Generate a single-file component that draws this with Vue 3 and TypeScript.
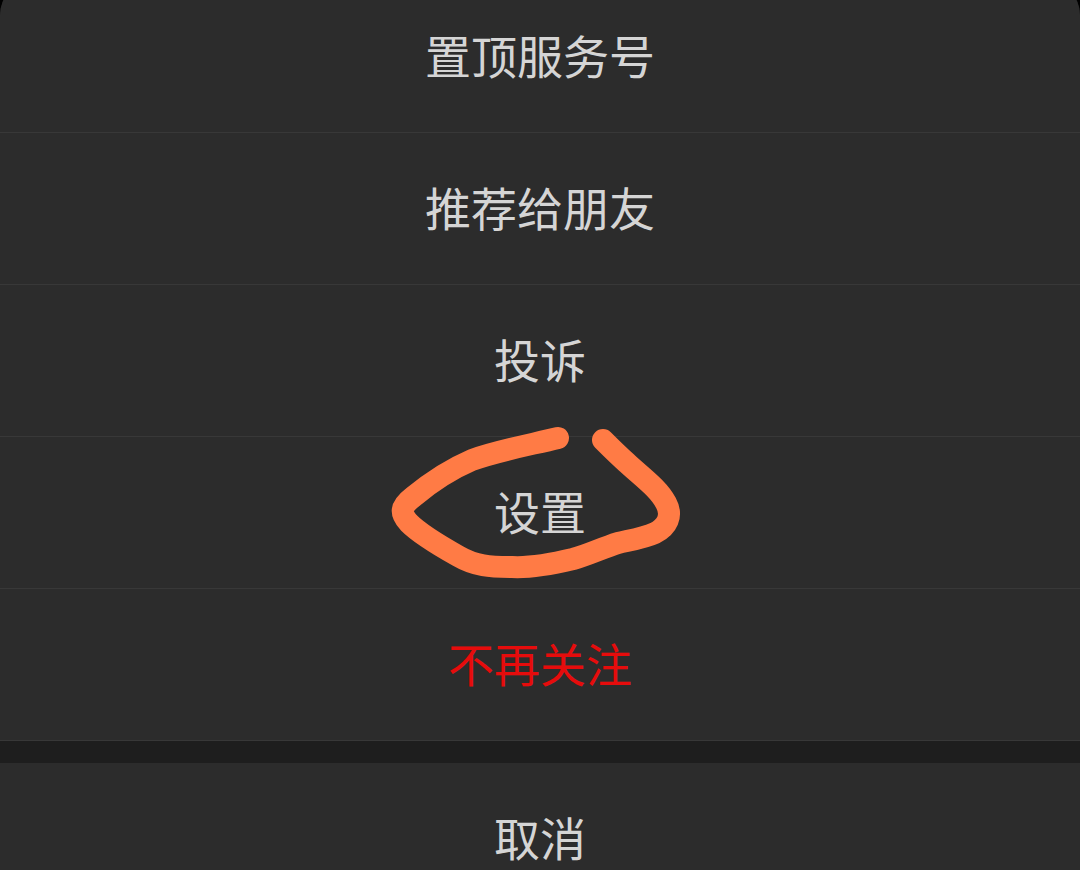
<script setup lang="ts">
interface Action {
  label: string
  danger?: boolean
  marked?: boolean
}

const actions: Action[] = [
  { label: '置顶服务号' },
  { label: '推荐给朋友' },
  { label: '投诉' },
  { label: '设置', marked: true },
  { label: '不再关注', danger: true },
]
</script>

<template>
  <main class="screen">
    <section class="sheet">
      <ul class="actions">
        <li v-for="action in actions" :key="action.label" class="item">
          <button type="button" class="row" :class="{ danger: action.danger }">{{ action.label }}</button>
          <svg v-if="action.marked" class="mark" viewBox="380 420 310 170" aria-hidden="true">
            <path
              d="M558 438 C529 445 496 451 472 460 C451 469 431 482 413 497 C400 507 400 513 409 523 C420 534 442 547 458 556 C475 566 490 567 512 567 C530 568 552 564 573 559 C588 555 602 548 618 543 C631 540 644 538 655 533 C667 527 673 516 666 503 C658 488 642 477 627 463 C618 455 610 447 603 440"
            />
          </svg>
        </li>
      </ul>
      <button type="button" class="row cancel">取消</button>
    </section>
  </main>
</template>

<style>
body {
  margin: 0;
  background: #000;
}
</style>

<style scoped>
.screen {
  height: 100vh;
  overflow: hidden;
  background: #000;
}

/* The sheet's top edge is scrolled slightly above the viewport. */
.sheet {
  margin-top: -19px;
  border-radius: 34px 34px 0 0;
  overflow: hidden;
  background: #1e1e1e;
}

.actions {
  margin: 0;
  padding: 0;
  list-style: none;
}

.item {
  position: relative;
  border-bottom: 1px solid #383838;
  background: #2c2c2c;
}

.row {
  display: block;
  box-sizing: border-box;
  width: 100%;
  height: 151px;
  margin: 0;
  padding: 0 0 6px;
  border: 0;
  background: #2c2c2c;
  color: #d5d5d5;
  font-family: "Noto Sans CJK SC", sans-serif;
  font-size: 46px;
  font-weight: 400;
  line-height: 52px;
  text-align: center;
  cursor: pointer;
}

.danger {
  color: #e60c0c;
}

.cancel {
  margin-top: 22px;
}

.mark {
  position: absolute;
  z-index: 1;
  top: -17px;
  left: calc(50% - 160px);
  width: 310px;
  height: 170px;
  pointer-events: none;
}

.mark path {
  fill: none;
  stroke: #ff7b45;
  stroke-width: 22;
  stroke-linecap: round;
  stroke-linejoin: round;
}
</style>
